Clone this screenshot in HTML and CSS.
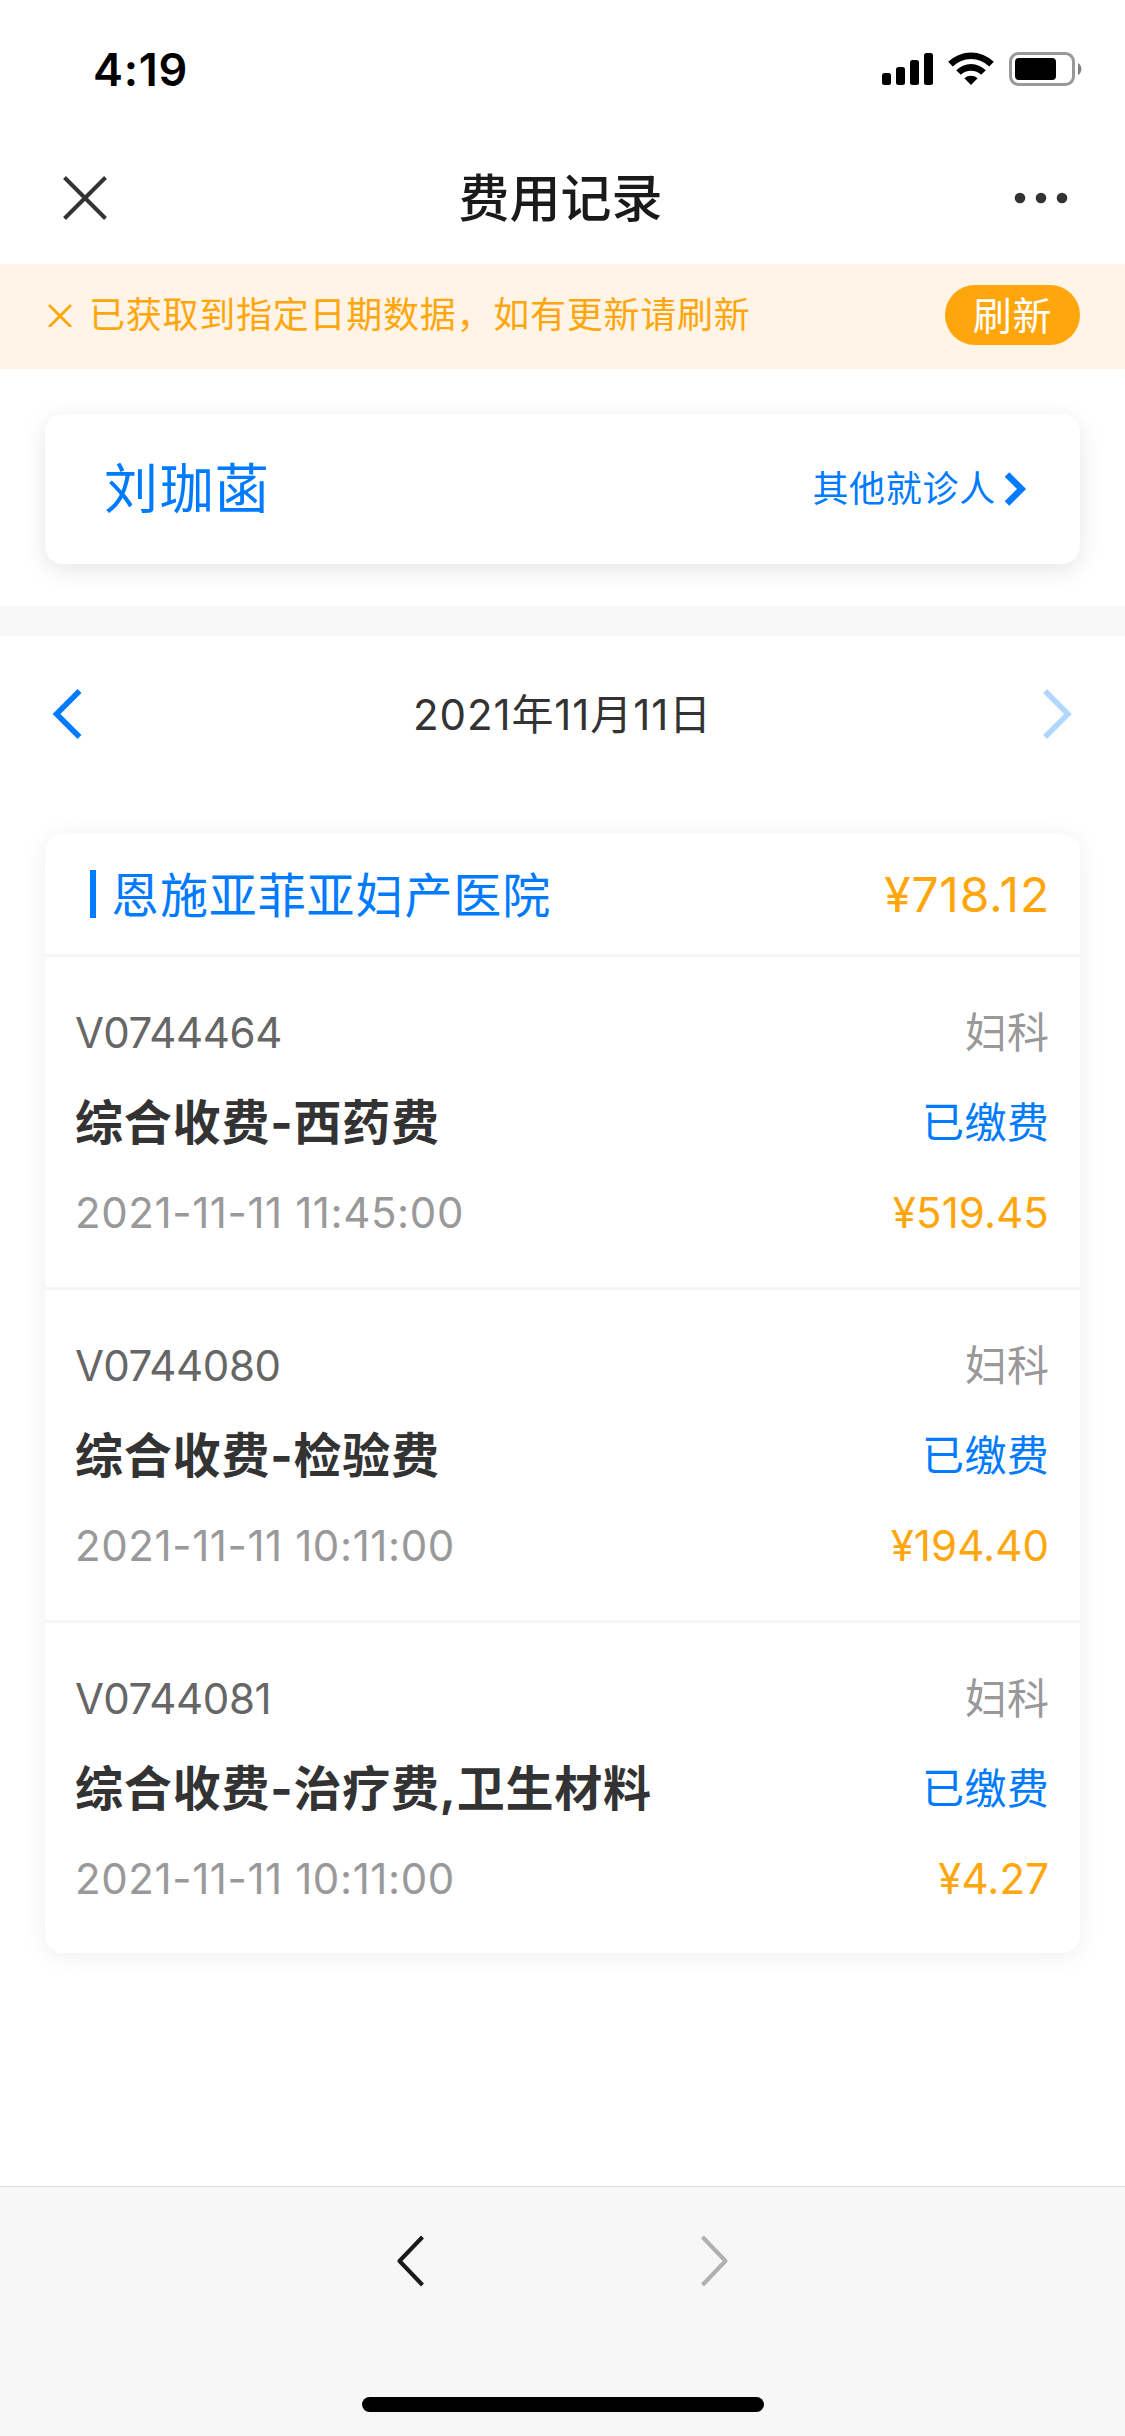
FILE: index.html
```html
<!DOCTYPE html>
<html lang="zh-CN">
<head>
<meta charset="utf-8">
<title>费用记录</title>
<link rel="stylesheet" href="styles.css">
</head>
<body>
<div class="screen">
  <div class="status">
    <span class="clock">4:19</span>
    <svg class="status-icons" width="204" height="40" viewBox="0 0 204 40">
      <rect x="4" y="23" width="9" height="12" rx="2.5"/>
      <rect x="18" y="17" width="9" height="18" rx="2.5"/>
      <rect x="32" y="10" width="9" height="25" rx="2.5"/>
      <rect x="46" y="3" width="9" height="32" rx="2.5"/>
      <path d="M70.2 11.8a32.6 32.6 0 0 1 45.6 0l-4.5 4.6a26.2 26.2 0 0 0-36.6 0z"/>
      <path d="M78.2 20.2a21 21 0 0 1 29.6 0l-4.6 4.6a14.6 14.6 0 0 0-20.4 0z"/>
      <path d="M86.4 28.2a10 10 0 0 1 13.2 0l-6.6 6.8z"/>
      <rect x="132.500" y="3.500" width="63" height="31" rx="8" fill="none" stroke="#999" stroke-width="3"/>
      <rect x="137" y="8" width="41" height="22" rx="4"/>
      <path d="M200 13a7 7 0 0 1 0 12z" fill="#808080"/>
    </svg>
  </div>
  <header class="nav">
    <svg width="44" height="44" viewBox="0 0 44 44" fill="none" stroke="#333" stroke-width="4"><path d="M1.500 1.500l41 41M42.500 1.500l-41 41"/></svg>
    <h1>费用记录</h1>
    <svg width="54" height="12" viewBox="0 0 54 12" fill="#333"><circle cx="6" cy="6" r="5.300"/><circle cx="27" cy="6" r="5.300"/><circle cx="48" cy="6" r="5.300"/></svg>
  </header>
  <div class="notice">
    <svg width="24" height="24" viewBox="0 0 24 24" fill="none" stroke="#ffa60d" stroke-width="2.800"><path d="M1 2l22 22M23 2L1 24"/></svg>
    <span class="notice-text">已获取到指定日期数据，如有更新请刷新</span>
    <button class="refresh">刷新</button>
  </div>
  <section class="patient-wrap">
    <div class="card patient">
      <span class="name">刘珈菡</span>
      <span class="switch">其他就诊人</span>
      <svg width="23" height="34" viewBox="0 0 23 34" fill="none" stroke="#007bff" stroke-width="6.500"><path d="M3 2.500L17.500 17 3 31.500"/></svg>
    </div>
  </section>
  <div class="date-bar">
    <svg width="30" height="50" viewBox="0 0 30 50" fill="none" stroke="#007bff" stroke-width="5.500"><path d="M27.500 2L4.500 25l23 23"/></svg>
    <span class="date">2021年11月11日</span>
    <svg width="30" height="50" viewBox="0 0 30 50" fill="none" stroke="#b2d7ff" stroke-width="5.500"><path d="M2 2l23 23L2 48"/></svg>
  </div>
  <section class="card bill">
    <div class="bill-head">
      <i class="mark"></i>
      <span class="hospital">恩施亚菲亚妇产医院</span>
      <span class="total">¥718.12</span>
    </div>
    <div class="item">
      <div class="row"><span class="code">V0744464</span><span class="dept">妇科</span></div>
      <div class="row"><span class="title">综合收费-西药费</span><span class="paid">已缴费</span></div>
      <div class="row"><span class="time">2021-11-11 11:45:00</span><span class="price">¥519.45</span></div>
    </div>
    <div class="item">
      <div class="row"><span class="code">V0744080</span><span class="dept">妇科</span></div>
      <div class="row"><span class="title">综合收费-检验费</span><span class="paid">已缴费</span></div>
      <div class="row"><span class="time">2021-11-11 10:11:00</span><span class="price">¥194.40</span></div>
    </div>
    <div class="item">
      <div class="row"><span class="code">V0744081</span><span class="dept">妇科</span></div>
      <div class="row"><span class="title">综合收费-治疗费,卫生材料</span><span class="paid">已缴费</span></div>
      <div class="row"><span class="time">2021-11-11 10:11:00</span><span class="price">¥4.27</span></div>
    </div>
  </section>
  <footer class="toolbar">
    <div class="history">
      <svg width="28" height="52" viewBox="0 0 28 52" fill="none" stroke="#1a1a1a" stroke-width="4" stroke-linejoin="round"><path d="M25.500 2L2.500 26l23 24"/></svg>
      <svg width="28" height="52" viewBox="0 0 28 52" fill="none" stroke="#b0b0b0" stroke-width="4" stroke-linejoin="round"><path d="M1.500 2l23 24-23 24"/></svg>
    </div>
    <div class="home"></div>
  </footer>
</div>
</body>
</html>
```

FILE: styles.css
```css
* { box-sizing: border-box; }
body { margin: 0; background: #fff; font-family: Inter, "Noto Sans CJK SC", sans-serif; color: #333; }
svg { display: block; flex: none; }
.screen { width: 1125px; height: 2436px; display: flex; flex-direction: column; }
.status { height: 132px; padding: 50px 43px 0 93px; display: flex; justify-content: space-between; align-items: flex-start; }
.clock { font-size: 45px; line-height: 39px; font-weight: 600; color: #000; letter-spacing: 0.7px; }
.nav { height: 132px; padding: 0 57px 0 63px; display: flex; align-items: center; justify-content: space-between; }
.nav h1 { margin: 0; padding-top: 2px; font-size: 51px; line-height: 60px; font-weight: 500; color: #1a1a1a; }
.notice { height: 105px; padding: 0 45px 3px 48px; background: #fff4e5; display: flex; align-items: center; color: #ffa60d; }
.notice-text { margin-left: 17px; flex: 1; font-size: 36px; line-height: 50px; letter-spacing: 0.75px; }
.refresh { width: 135px; height: 60px; padding: 1px 0 0; border: 0; border-radius: 30px; background: #ffa60d; color: #fff; font: inherit; font-size: 39px; line-height: 59px; letter-spacing: 0.7px; }
.card { background: #fff; border-radius: 18px; }
.patient-wrap { height: 267px; padding: 45px 45px 0; border-bottom: 30px solid #f8f8f8; }
.patient { height: 150px; padding: 0 53px 0 59px; display: flex; align-items: center; color: #007bff; box-shadow: 0 6px 24px rgba(0,0,0,.1); }
.name { flex: 1; padding-top: 2px; font-size: 54px; line-height: 74px; letter-spacing: 1.4px; }
.switch { margin-right: 8px; font-size: 36px; line-height: 50px; letter-spacing: 0.72px; }
.date-bar { height: 156px; padding: 0 52px; display: flex; align-items: center; justify-content: space-between; }
.date { padding-top: 1px; font-size: 42px; line-height: 60px; letter-spacing: 0.9px; font-feature-settings: "calt" 0; }
.bill { height: 1119px; margin: 42px 45px 0; box-shadow: 0 3px 24px rgba(0,0,0,.07); }
.bill-head { height: 123px; padding: 0 30px 0 45px; border-bottom: 3px solid #f5f5f5; display: flex; align-items: center; }
.mark { width: 6px; height: 48px; background: #007bff; }
.hospital { flex: 1; margin-left: 15px; padding-top: 3px; font-size: 48px; line-height: 60px; letter-spacing: 0.9px; color: #007bff; }
.total { padding-top: 2px; font-size: 48px; line-height: 60px; letter-spacing: 0.8px; color: #ffa60d; }
.item { height: 333px; padding: 31px 31px 0 30px; border-bottom: 3px solid #f5f5f5; }
.item:last-child { height: 330px; border-bottom: 0; }
.row { height: 90px; display: flex; align-items: center; justify-content: space-between; font-size: 42px; line-height: 60px; }
.code { color: #666; letter-spacing: -0.4px; }
.title { font-size: 48px; font-weight: 700; letter-spacing: 0.8px; }
.time, .dept { color: #999; }
.time { letter-spacing: 0.6px; }
.paid { color: #007bff; letter-spacing: 0.3px; }
.price { color: #ffa60d; letter-spacing: 0.1px; }
.toolbar { height: 250px; margin-top: auto; padding-top: 48px; border-top: 1px solid #e0e0e0; background: #f7f7f7; display: flex; flex-direction: column; align-items: center; }
.history { width: 332px; display: flex; justify-content: space-between; }
.home { width: 402px; height: 15px; margin-top: 110px; border-radius: 8px; background: #000; }
```
